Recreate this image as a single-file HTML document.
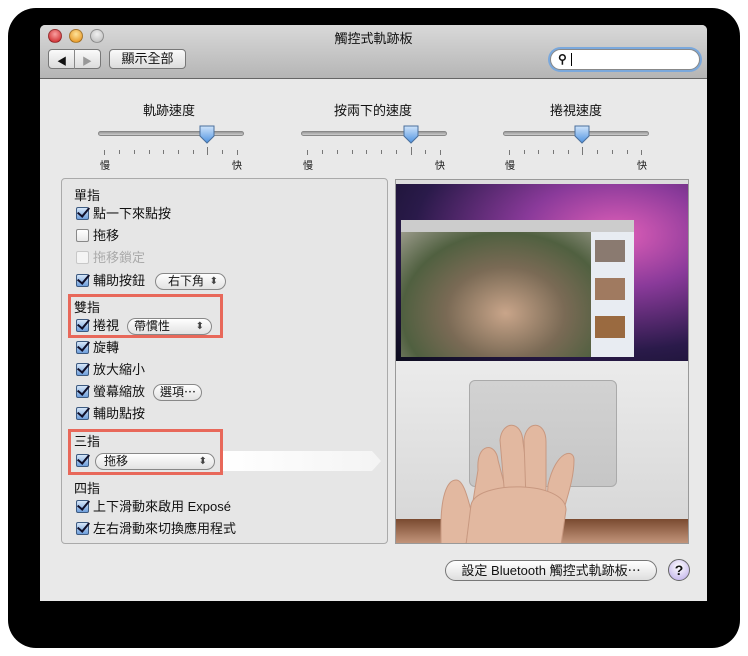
<!DOCTYPE html>
<html><head><meta charset="utf-8"><style>
*{margin:0;padding:0;box-sizing:border-box}
body{width:748px;height:656px;background:#fff;position:relative;overflow:hidden;font-family:"Liberation Sans","Noto Sans CJK TC",sans-serif;font-size:13px;color:#111}
.abs{position:absolute}
#frame{left:8px;top:8px;width:732px;height:640px;background:#000;border-radius:28px}
#win{left:40px;top:25px;width:667px;height:576px;background:#e9e9e9;border-radius:5px 5px 0 0;overflow:hidden}
#tb{left:0;top:0;width:667px;height:54px;background:linear-gradient(#d9d9d9,#b5b5b5);border-bottom:1px solid #666}
.light{width:14px;height:14px;border-radius:50%;top:4px;border:1px solid rgba(0,0,0,.3)}
.btn{background:linear-gradient(#fafafa,#dcdcdc);border:1px solid #777;border-radius:4px}
.lab{font-size:13px}
.track{height:5px;background:linear-gradient(#999,#ccc);border-radius:3px;border:1px solid #888}
.cb{width:13px;height:13px;border:1px solid #3d5a80;border-radius:2px;background:linear-gradient(#d6e6f8,#6f9fdc)}
.cb.off{background:linear-gradient(#fff,#e8e8e8);border-color:#888}
.cb.dis{background:#f4f4f4;border-color:#c8c8c8}
.cb::after{content:"";position:absolute;left:3px;top:-3px;width:5px;height:10px;border:solid #10102a;border-width:0 2px 2px 0;transform:rotate(40deg)}
.cb.off::after,.cb.dis::after{display:none}
.row{left:76px;height:18px;line-height:18px;font-size:13px}
.row .cb{left:0;top:2px}
.row span.t{position:absolute;left:17px;white-space:nowrap}
.pop{height:17px;border:1px solid #888;border-radius:9px;background:linear-gradient(#fff,#e2e2e2);font-size:12px;line-height:15px;padding-left:12px}
.pop::after{content:"⬍";position:absolute;right:7px;top:0;font-size:10px;color:#444}
.pop.np::after{display:none}
.red{border:3px solid #e8685a}
</style></head><body>
<div id="frame" class="abs"></div>
<div id="win" class="abs">
 <div id="tb" class="abs"></div>
 <div class="abs light" style="left:8px;background:radial-gradient(circle at 50% 35%,#f9a0a0,#c8181c)"></div>
 <div class="abs light" style="left:29px;background:radial-gradient(circle at 50% 35%,#fde39a,#e48a10)"></div>
 <div class="abs light" style="left:50px;background:radial-gradient(circle at 50% 35%,#f0f0f0,#b8b8b8)"></div>
 <div class="abs" style="left:0;top:3px;width:667px;text-align:center;font-size:13px">觸控式軌跡板</div>
 <div class="abs btn" style="left:8px;top:24px;width:53px;height:20px"></div>
 <div class="abs" style="left:34px;top:24px;width:1px;height:20px;background:#888"></div>
 <div class="abs" style="left:17px;top:28px;font-size:10px">◀</div>
 <div class="abs" style="left:42px;top:28px;font-size:10px;color:#999">▶</div>
 <div class="abs btn" style="left:69px;top:24px;width:77px;height:20px;text-align:center;font-size:13px;line-height:18px">顯示全部</div>
 <div class="abs" style="left:510px;top:24px;width:150px;height:21px;border-radius:11px;background:#fff;border:1px solid #888;box-shadow:0 0 0 2px #7aa8dc"></div>
 <div class="abs" style="left:518px;top:27px;font-size:12px;font-weight:bold">⚲</div>
 <div class="abs" style="left:531px;top:28px;width:1px;height:13px;background:#000"></div>

 <div class="abs lab" style="left:103px;top:75px">軌跡速度</div>
 <div class="abs lab" style="left:294px;top:75px">按兩下的速度</div>
 <div class="abs lab" style="left:510px;top:75px">捲視速度</div>
</div>

<div class="abs track" style="left:98px;top:131px;width:146px"></div>
<div class="abs track" style="left:301px;top:131px;width:146px"></div>
<div class="abs track" style="left:503px;top:131px;width:146px"></div>
<svg class="abs" style="left:0;top:0" width="748" height="180">
 <defs><linearGradient id="g" x1="0" y1="0" x2="0" y2="1"><stop offset="0" stop-color="#cfe4fb"/><stop offset="1" stop-color="#4f93e0"/></linearGradient></defs>
 <path d="M200 126h14v10l-7 7l-7-7z" fill="url(#g)" stroke="#4a6f9c"/>
 <path d="M404 126h14v10l-7 7l-7-7z" fill="url(#g)" stroke="#4a6f9c"/>
 <path d="M575 126h14v10l-7 7l-7-7z" fill="url(#g)" stroke="#4a6f9c"/>
 <g stroke="#777" stroke-width="1">
  <path d="M104.5 150v5M119.5 150v4M134.5 150v4M149.5 150v4M163.5 150v4M178.5 150v4M193.5 150v4M207.5 147v8M222.5 150v4M237.5 150v5"/>
  <path d="M307.5 150v5M322.5 150v4M337.5 150v4M352.5 150v4M366.5 150v4M381.5 150v4M396.5 150v4M411.5 147v8M425.5 150v4M440.5 150v5"/>
  <path d="M509.5 150v5M524.5 150v4M538.5 150v4M553.5 150v4M568.5 150v4M582.5 147v8M597.5 150v4M612.5 150v4M627.5 150v4M641.5 150v5"/>
 </g>
</svg>
<div class="abs" style="left:100px;top:157px;font-size:10px">慢</div>
<div class="abs" style="left:232px;top:157px;font-size:10px">快</div>
<div class="abs" style="left:303px;top:157px;font-size:10px">慢</div>
<div class="abs" style="left:435px;top:157px;font-size:10px">快</div>
<div class="abs" style="left:505px;top:157px;font-size:10px">慢</div>
<div class="abs" style="left:637px;top:157px;font-size:10px">快</div>

<div class="abs" style="left:61px;top:178px;width:327px;height:366px;border:1px solid #aaa;border-radius:4px;background:#e6e6e6"></div>
<svg class="abs" style="left:220px;top:451px" width="162" height="20"><defs><linearGradient id="w" x1="0" x2="1"><stop offset="0" stop-color="#fff"/><stop offset="1" stop-color="#f4f4f4"/></linearGradient></defs><path d="M0 0H152L161 10L152 20H0z" fill="url(#w)"/></svg>
<div class="abs" style="left:74px;top:185px;font-size:13px">單指</div>
<div class="abs row" style="top:205px"><div class="abs cb"></div><span class="t">點一下來點按</span></div>
<div class="abs row" style="top:227px"><div class="abs cb off"></div><span class="t">拖移</span></div>
<div class="abs row" style="top:249px;color:#aaa"><div class="abs cb dis"></div><span class="t">拖移鎖定</span></div>
<div class="abs row" style="top:272px"><div class="abs cb"></div><span class="t">輔助按鈕</span></div>
<div class="abs pop" style="left:155px;top:273px;width:71px">右下角</div>
<div class="abs red" style="left:68px;top:294px;width:155px;height:44px"></div>
<div class="abs" style="left:74px;top:297px;font-size:13px">雙指</div>
<div class="abs row" style="top:317px"><div class="abs cb"></div><span class="t">捲視</span></div>
<div class="abs pop" style="left:127px;top:318px;width:85px;padding-left:6px">帶慣性</div>
<div class="abs row" style="top:339px"><div class="abs cb"></div><span class="t">旋轉</span></div>
<div class="abs row" style="top:361px"><div class="abs cb"></div><span class="t">放大縮小</span></div>
<div class="abs row" style="top:383px"><div class="abs cb"></div><span class="t">螢幕縮放</span></div>
<div class="abs pop np" style="left:153px;top:384px;width:49px;padding-left:6px">選項⋯</div>
<div class="abs row" style="top:405px"><div class="abs cb"></div><span class="t">輔助點按</span></div>
<div class="abs red" style="left:68px;top:429px;width:155px;height:46px"></div>
<div class="abs" style="left:74px;top:431px;font-size:13px">三指</div>
<div class="abs row" style="top:452px"><div class="abs cb"></div></div>
<div class="abs pop" style="left:95px;top:453px;width:120px;padding-left:8px">拖移</div>
<div class="abs" style="left:74px;top:478px;font-size:13px">四指</div>
<div class="abs row" style="top:498px"><div class="abs cb"></div><span class="t">上下滑動來啟用 Exposé</span></div>
<div class="abs row" style="top:520px"><div class="abs cb"></div><span class="t">左右滑動來切換應用程式</span></div>

<div class="abs" style="left:395px;top:179px;width:294px;height:365px;border:1px solid #999;overflow:hidden">
 <div class="abs" style="left:0;top:0;width:294px;height:181px;background:radial-gradient(ellipse at 75% 30%,#e05fb8 0%,#8a3a9a 30%,#2a1a4a 65%,#0c0c1e 100%)"></div>
 <div class="abs" style="left:0;top:0;width:294px;height:4px;background:#ddd"></div>
 <div class="abs" style="left:5px;top:40px;width:233px;height:137px;background:#ccc"></div>
 <div class="abs" style="left:5px;top:52px;width:190px;height:125px;background:radial-gradient(ellipse at 55% 65%,#c9a58a 0%,#7a6a55 40%,#506040 70%,#9a9a8a 100%)"></div>
 <div class="abs" style="left:195px;top:52px;width:43px;height:125px;background:#e8ecf2"></div>
 <div class="abs" style="left:199px;top:60px;width:30px;height:22px;background:#8a7a70"></div>
 <div class="abs" style="left:199px;top:98px;width:30px;height:22px;background:#a07a60"></div>
 <div class="abs" style="left:199px;top:136px;width:30px;height:22px;background:#9a6a40"></div>
 <div class="abs" style="left:0;top:181px;width:294px;height:158px;background:linear-gradient(#ebebeb,#d8d8d8)"></div>
 <div class="abs" style="left:73px;top:200px;width:148px;height:107px;border-radius:6px;background:linear-gradient(#d2d2d2,#c6c6c6);border:1px solid #aaa"></div>
 <div class="abs" style="left:0;top:339px;width:294px;height:26px;background:linear-gradient(#7a4a30,#c89a80)"></div>
 <svg class="abs" style="left:0;top:0" width="294" height="365"><g fill="#e2b8a0" stroke="#c89880">
  <path d="M45 345 C45 320 50 300 60 300 C68 300 72 320 75 330 L70 365 H45z"/>
  <path d="M82 290 C80 262 100 262 102 280 L115 330 L90 365 H70z"/>
  <path d="M104 260 C106 240 126 240 127 262 L135 320 L110 330z"/>
  <path d="M128 260 C130 240 150 240 150 262 L150 320 L130 320z"/>
  <path d="M152 305 C160 270 178 268 178 280 C178 300 170 320 165 340 L150 340z"/>
  <path d="M75 325 C80 300 170 300 170 330 L165 365 H70z"/>
 </g></svg>
</div>

<div class="abs" style="left:445px;top:560px;width:212px;height:21px;border:1px solid #777;border-radius:11px;background:linear-gradient(#fff,#dedede);text-align:center;font-size:13px;line-height:19px">設定 Bluetooth 觸控式軌跡板⋯</div>
<div class="abs" style="left:668px;top:559px;width:22px;height:22px;border-radius:50%;border:1px solid #666;background:radial-gradient(circle at 50% 35%,#fff,#b9a8e8);text-align:center;font-weight:bold;font-size:14px;line-height:20px">?</div>
</body></html>
